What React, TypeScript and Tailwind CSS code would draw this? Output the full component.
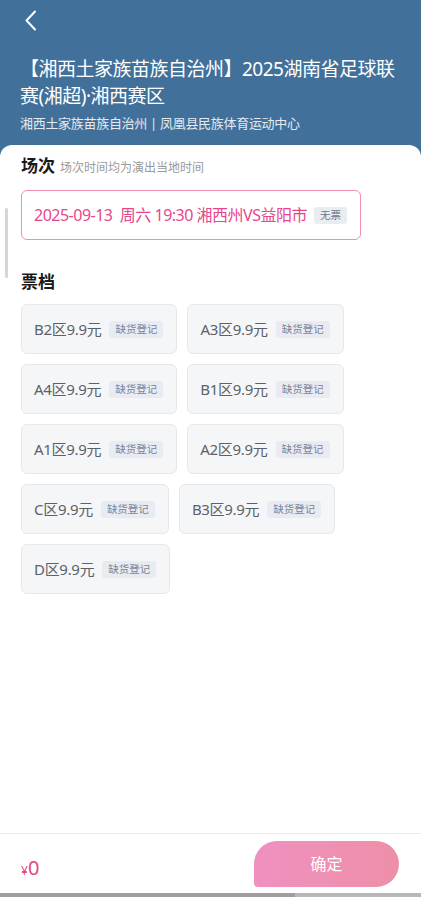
import React from "react";

const tickets = [
  "B2区9.9元",
  "A3区9.9元",
  "A4区9.9元",
  "B1区9.9元",
  "A1区9.9元",
  "A2区9.9元",
  "C区9.9元",
  "B3区9.9元",
  "D区9.9元",
];

const App = () => {
  return (
    <div
      className="w-[421px] h-[897px] flex flex-col bg-[#41709a] overflow-hidden"
      style={{ fontFamily: '"Noto Sans", "Noto Sans CJK SC", sans-serif' }}
    >
      {/* header */}
      <div className="h-[145px] shrink-0 pl-5 pr-[14px] text-white">
        <div className="h-[40px] flex items-center pl-[4px]">
          <svg width="13" height="21" viewBox="0 0 13 21" fill="none">
            <path d="M11 1.5 L2.5 10.5 L11 19.5" stroke="white" strokeWidth="2" strokeLinecap="round" strokeLinejoin="round" />
          </svg>
        </div>
        <div className="mt-[16px] text-[19px] leading-[27px] tracking-[-0.5px]">
          【湘西土家族苗族自治州】2025湖南省足球联赛(湘超)·湘西赛区
        </div>
        <div className="mt-[4px] text-[13px] leading-[18px] text-white/85 tracking-[-0.3px]">
          湘西土家族苗族自治州 | 凤凰县民族体育运动中心
        </div>
      </div>

      {/* sheet */}
      <div className="flex-1 flex flex-col bg-white rounded-t-[12px] relative">
        <div className="absolute left-[5px] top-[63px] w-[3px] h-[70px] rounded-full bg-[#d6d6d6]" />
        <div className="flex-1 px-[21px] pt-[8px]">
          <div className="flex items-baseline gap-[5px]">
            <span className="text-[17px] leading-[26px] font-bold text-[#1a1a1a]">场次</span>
            <span className="text-[12px] text-[#9a9a9a]">场次时间均为演出当地时间</span>
          </div>
          <div className="mt-[11px] w-[340px] h-[50px] rounded-[6px] border border-[#f08fb4] flex items-center pl-[12px] gap-[7px]">
            <span className="text-[16px] text-[#e8468c] whitespace-pre tracking-[-0.5px]">2025-09-13  周六 19:30 湘西州VS益阳市</span>
            <span className="px-[6px] h-[17px] rounded-[3px] bg-[#e9ecf1] text-[10.5px] leading-[17px] text-[#6e7689]">无票</span>
          </div>

          <div className="mt-[29px] text-[17px] leading-[26px] font-bold text-[#1a1a1a]">票档</div>
          <div className="mt-[9px] flex flex-wrap gap-x-[10px] gap-y-[10px] w-[345px]">
            {tickets.map((t) => (
              <div
                key={t}
                className="h-[50px] pl-[12px] pr-[13px] flex items-center gap-[8px] rounded-[6px] border border-[#e6e8ec] bg-[#f5f6f8]"
              >
                <span className="text-[15px] text-[#5c6168] tracking-[-0.3px]">{t}</span>
                <span className="px-[6px] h-[17px] rounded-[3px] bg-[#e8ecf2] text-[10.5px] leading-[17px] text-[#7a8398]">缺货登记</span>
              </div>
            ))}
          </div>
        </div>

        {/* bottom bar */}
        <div className="h-[60px] shrink-0 border-t border-[#ececec] flex items-center justify-between pl-[21px] pr-[22px]">
          <div className="flex items-baseline text-[#e8457a] pt-[8px]">
            <span className="text-[12px]">¥</span>
            <span className="text-[20px] leading-[24px]">0</span>
          </div>
          <div className="w-[145px] h-[46px] rounded-[23px] rounded-bl-[4px] bg-gradient-to-r from-[#ef90c0] to-[#ee8fa8] flex items-center justify-center text-white text-[16px]">
            确定
          </div>
        </div>
        <div className="h-[4px] shrink-0 flex">
          <div className="w-[295px] bg-[#9e9e9e]" />
          <div className="flex-1 bg-[#b8b8b8]" />
        </div>
      </div>
    </div>
  );
};

export default App;
